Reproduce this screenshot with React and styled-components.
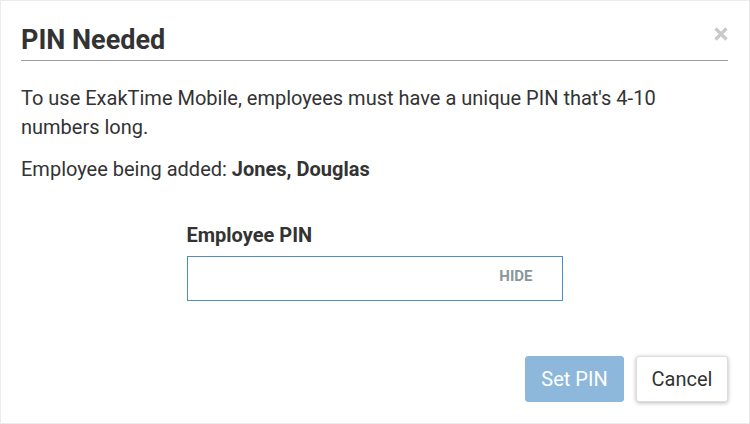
import styled, { createGlobalStyle } from "styled-components";

const GlobalStyle = createGlobalStyle`
  * { box-sizing: border-box; }
  body {
    margin: 0;
    background: #ffffff;
    font-family: Roboto, "Liberation Sans", Arial, sans-serif;
  }
`;

export default function App() {
  return (
    <>
      <GlobalStyle />
      <Dialog>
        <Header>
          <Title>PIN Needed</Title>
          <Close aria-label="close">
            <svg width="14" height="14" viewBox="0 0 14 14">
              <path d="M1.5 1.5L12.5 12.5M12.5 1.5L1.5 12.5" stroke="#c9c9c9" strokeWidth="3.2" strokeLinecap="butt" />
            </svg>
          </Close>
        </Header>

        <Text>
          To use ExakTime Mobile, employees must have a unique PIN that's 4-10
          numbers long.
        </Text>
        <Text $gap>
          Employee being added: <b>Jones, Douglas</b>
        </Text>

        <Field>
          <Label htmlFor="pin">Employee PIN</Label>
          <InputBox>
            <PinInput id="pin" type="password" />
            <HideButton>HIDE</HideButton>
          </InputBox>
        </Field>

        <Footer>
          <Button $primary>Set PIN</Button>
          <Button>Cancel</Button>
        </Footer>
      </Dialog>
    </>
  );
}

const Dialog = styled.div`
  width: 750px;
  height: 424px;
  border: 1px solid #ececec;
  padding: 0 21px 21px 20px;
  display: flex;
  flex-direction: column;
  color: #333333;
`;

const Header = styled.div`
  display: flex;
  justify-content: space-between;
  align-items: flex-start;
  padding-top: 24px;
  padding-bottom: 5px;
  border-bottom: 1px solid #9e9e9e;
`;

const Title = styled.h1`
  margin: 0;
  font-size: 27px;
  line-height: 30px;
  font-weight: 700;
  color: #333333;
`;

const Close = styled.button`
  border: none;
  background: none;
  padding: 0;
  margin-top: 2px;
  display: flex;
  cursor: pointer;
`;

const Text = styled.p`
  margin: ${(p) => (p.$gap ? "13px" : "23px")} 0 0;
  font-size: 20px;
  line-height: 29px;

  b {
    font-weight: 700;
  }
`;

const Field = styled.div`
  width: 376px;
  margin: 37px auto 0;
  display: flex;
  flex-direction: column;
  gap: 6px;
`;

const Label = styled.label`
  font-size: 20px;
  line-height: 29px;
  font-weight: 700;
`;

const InputBox = styled.div`
  height: 45px;
  border: 1px solid #4b8ec8;
  display: flex;
  align-items: center;
  padding-right: 29px;
`;

const PinInput = styled.input`
  flex: 1;
  min-width: 0;
  height: 100%;
  border: none;
  outline: none;
  padding: 0 12px;
  font-size: 20px;
  font-family: inherit;
  background: transparent;
`;

const HideButton = styled.button`
  border: none;
  background: none;
  padding: 0;
  margin-bottom: 5px;
  font-family: inherit;
  font-size: 15px;
  font-weight: 700;
  color: #8a9799;
  cursor: pointer;
`;

const Footer = styled.div`
  margin-top: auto;
  display: flex;
  justify-content: flex-end;
  gap: 12px;
`;

const Button = styled.button`
  height: 46px;
  padding: 0 ${(p) => (p.$primary ? "14px" : "14px")};
  min-width: ${(p) => (p.$primary ? "99px" : "92px")};
  border-radius: 3px;
  font-family: inherit;
  font-size: 20px;
  cursor: pointer;
  border: 1px solid ${(p) => (p.$primary ? "#8db8dc" : "#dddddd")};
  background: ${(p) => (p.$primary ? "#8db8dc" : "#ffffff")};
  color: ${(p) => (p.$primary ? "#ffffff" : "#333333")};
  box-shadow: ${(p) => (p.$primary ? "none" : "0 1px 4px rgba(0, 0, 0, 0.28)")};
`;
